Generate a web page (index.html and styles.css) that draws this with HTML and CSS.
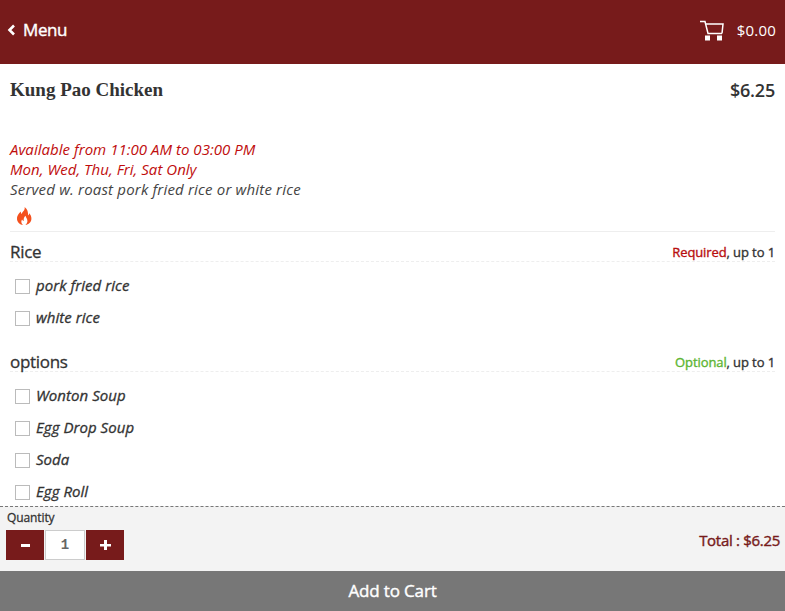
FILE: index.html
```html
<!DOCTYPE html>
<html lang="en">
<head>
    <meta charset="UTF-8">
    <meta name="viewport" content="width=device-width, initial-scale=1.0">
    <title>Kung Pao Chicken</title>
    <link rel="stylesheet" href="styles.css">
</head>
<body>

<div class="page">
    <header class="topbar">
        <a class="back">
            <svg class="back-icon" width="9" height="12" viewBox="0 0 9 12"><path d="M7 1.500 2.500 6 7 10.500" fill="none" stroke="#fff" stroke-width="2.600"/></svg>
            <span class="back-label">Menu</span>
        </a>
        <div class="cart">
            <svg width="24" height="21" viewBox="0 0 24 21" fill="none" stroke="#fff" stroke-width="1.500">
                <path d="M0 1.500H5L8 13.500H22"/>
                <path d="M5.500 4H23L22 13.500"/>
                <rect x="5" y="15.500" width="5" height="5" fill="#fff" stroke="none"/>
                <rect x="17" y="15.500" width="5" height="5" fill="#fff" stroke="none"/>
            </svg>
            <span class="cart-total">$0.00</span>
        </div>
    </header>

    <main class="content">
        <div class="item-head">
            <h1>Kung Pao Chicken</h1>
            <div class="price">$6.25</div>
        </div>
        <div class="notes">
            <p class="avail">Available from 11:00 AM to 03:00 PM</p>
            <p class="avail">Mon, Wed, Thu, Fri, Sat Only</p>
            <p class="served">Served w. roast pork fried rice or white rice</p>
        </div>
        <div class="spicy">
            <svg width="16" height="18" viewBox="0 0 16 18"><path fill="#f4511e" d="M8.600 0C9.400 3 6.600 4.600 5.400 7 4.900 6.200 4.800 5.400 5 4.400 2.600 6.200.6 9 1 12.200 1.400 15.400 4.200 17.600 7 18 5.200 16.400 4.800 14.400 6 12.600 6.400 13.400 7 13.800 7.800 14 7.400 12 8 10 9.600 8.800 9.600 10.600 11.800 11.800 11.400 14.400 11.200 15.800 10.400 17 9.400 18 12.600 17.600 15.200 15.200 15.400 12 15.600 9.800 14.600 7.600 13.200 6.200 13.200 7.200 12.800 8 12 8.600 12.400 5.400 11.400 2 8.600 0Z"/></svg>
        </div>

        <section class="group">
            <div class="group-head">
                <span class="group-name">Rice</span>
                <span class="group-rule"><span class="required">Required</span>, up to 1</span>
            </div>
            <label class="option"><span class="box"></span>pork fried rice</label>
            <label class="option"><span class="box"></span>white rice</label>
        </section>

        <section class="group">
            <div class="group-head">
                <span class="group-name">options</span>
                <span class="group-rule"><span class="optional">Optional</span>, up to 1</span>
            </div>
            <label class="option"><span class="box"></span>Wonton Soup</label>
            <label class="option"><span class="box"></span>Egg Drop Soup</label>
            <label class="option"><span class="box"></span>Soda</label>
            <label class="option"><span class="box"></span>Egg Roll</label>
        </section>
    </main>

    <div class="order">
        <div class="qty">
            <div class="qty-label">Quantity</div>
            <div class="qty-row">
                <button class="qty-btn">
                    <svg width="11" height="10" viewBox="0 0 11 10"><rect x="1" y="4" width="9" height="3" fill="#fff"/></svg>
                </button>
                <div class="qty-value">1</div>
                <button class="qty-btn">
                    <svg width="11" height="10" viewBox="0 0 11 10"><path d="M0 4H4V0H7V4H11V6.500H7V10H4V6.500H0Z" fill="#fff"/></svg>
                </button>
            </div>
        </div>
        <div class="total">Total : $6.25</div>
    </div>
    <div class="add">Add to Cart</div>
</div>

</body>
</html>
```

FILE: styles.css
```css
body {
    margin: 0;
    font-family: "Open Sans", sans-serif;
    color: #333;
    background: #fff;
}

.page {
    display: flex;
    flex-direction: column;
    height: 611px;
    overflow: hidden;
}

p {
    margin: 0;
}

.topbar {
    flex: none;
    height: 64px;
    display: flex;
    justify-content: space-between;
    align-items: center;
    padding: 0 9px 4px 7px;
    box-sizing: border-box;
    background: #771b1b;
    color: #fff;
}

.back {
    display: flex;
    align-items: center;
    gap: 7px;
    font-size: 17px;
    -webkit-text-stroke: 0.4px #fff;
    letter-spacing: -0.4px;
}

.back-label {
    margin-top: -2px;
}

.cart {
    display: flex;
    align-items: center;
    gap: 13px;
}

.cart-total {
    font-size: 15px;
    letter-spacing: 0.2px;
}

.content {
    flex: 1;
    min-height: 0;
    overflow: hidden;
    padding: 0 10px;
}

.item-head {
    display: flex;
    justify-content: space-between;
    align-items: center;
    height: 52px;
    margin-bottom: 23px;
}

h1 {
    margin: 0;
    font-family: "Liberation Serif", serif;
    font-size: 19px;
    font-weight: bold;
    color: #333;
}

.price {
    font-size: 18px;
    font-weight: 600;
    letter-spacing: -0.2px;
}

.notes {
    font-size: 15px;
    font-style: italic;
    line-height: 20px;
}

.avail {
    color: #c00d0d;
    letter-spacing: 0.03px;
}

.served {
    color: #444;
    letter-spacing: 0.18px;
}

.spicy {
    height: 33px;
    padding-left: 6px;
    padding-top: 8px;
    box-sizing: border-box;
    border-bottom: 1px solid #eee;
}

.group-head {
    display: flex;
    justify-content: space-between;
    align-items: center;
    height: 30px;
    padding-top: 10px;
    box-sizing: border-box;
    border-bottom: 1px dashed #eee;
}

.group + .group {
    margin-top: 9px;
}

.group-name {
    font-size: 17px;
    letter-spacing: -0.3px;
    -webkit-text-stroke: 0.3px #333;
}

.group-rule {
    font-size: 13px;
    letter-spacing: -0.1px;
    -webkit-text-stroke: 0.35px;
}

.required {
    color: #b80f0f;
}

.optional {
    color: #5cb531;
}

.option {
    display: flex;
    align-items: center;
    gap: 6px;
    height: 32px;
    padding-left: 5px;
    font-size: 15px;
    font-style: italic;
    letter-spacing: 0.05px;
    -webkit-text-stroke: 0.3px #333;
}

.group-head + .option {
    margin-top: 7px;
}

.box {
    width: 13px;
    height: 13px;
    margin-top: 2px;
    border: 1px solid #bbb;
    background: #fff;
}

.order {
    flex: none;
    height: 65px;
    display: flex;
    justify-content: space-between;
    align-items: flex-start;
    padding: 3px 5px 0 6px;
    box-sizing: border-box;
    border-top: 1px dashed #777;
    background: #f3f3f3;
}

.qty-label {
    font-size: 12px;
    line-height: 16px;
    padding-left: 1px;
    margin-bottom: 4px;
    letter-spacing: -0.1px;
    -webkit-text-stroke: 0.3px #333;
}

.qty-row {
    display: flex;
    gap: 1px;
}

.qty-btn {
    width: 38px;
    height: 30px;
    padding: 0;
    border: none;
    background: #771b1b;
    display: flex;
    align-items: center;
    justify-content: center;
}

.qty-value {
    width: 40px;
    height: 30px;
    box-sizing: border-box;
    border: 1px solid #ccc;
    background: #fff;
    color: #666;
    font-family: "Liberation Mono", monospace;
    font-size: 14px;
    font-weight: bold;
    text-align: center;
    line-height: 28px;
}

.total {
    margin-top: 20px;
    font-size: 15px;
    letter-spacing: -0.3px;
    -webkit-text-stroke: 0.4px #771b1b;
    color: #771b1b;
}

.add {
    flex: none;
    height: 40px;
    background: #777;
    color: #fff;
    font-size: 17px;
    line-height: 40px;
    text-align: center;
    letter-spacing: -0.15px;
    -webkit-text-stroke: 0.4px #fff;
}
```
